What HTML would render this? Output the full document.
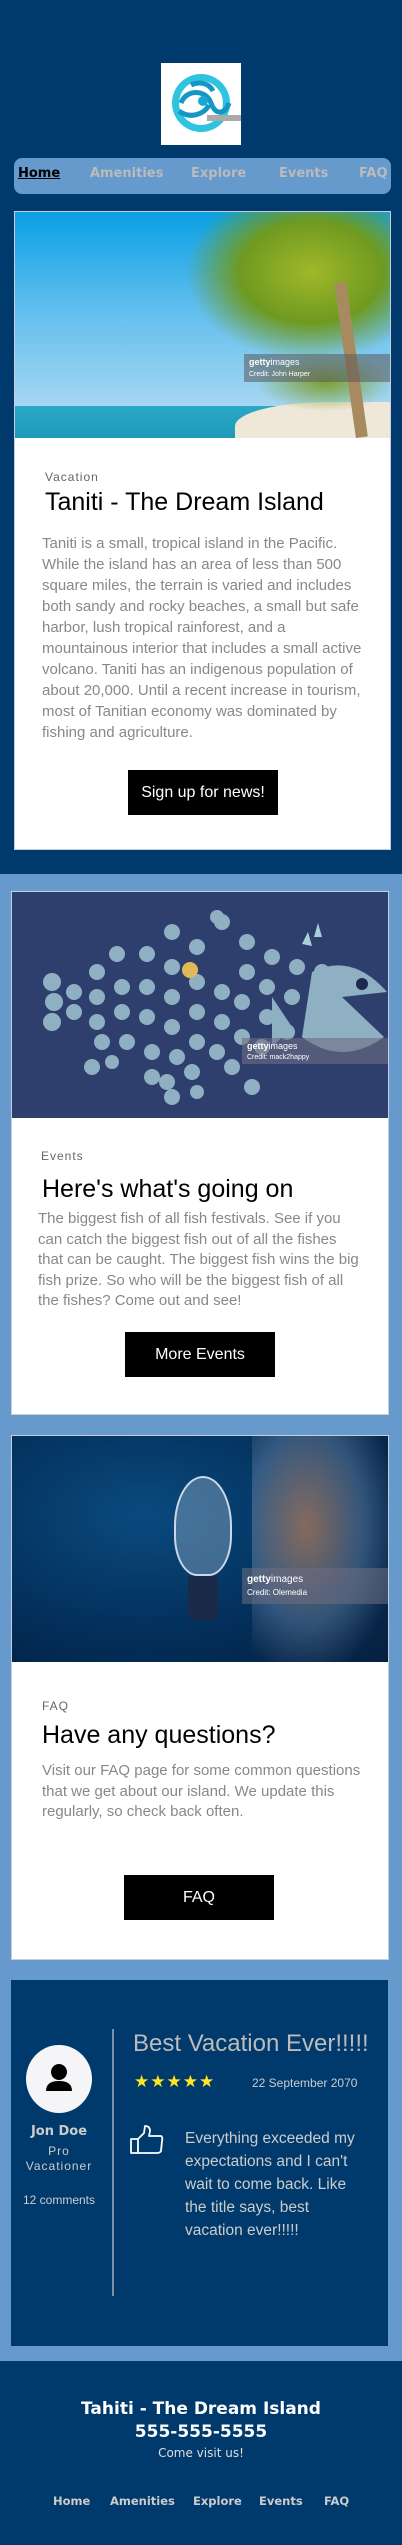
<!DOCTYPE html>
<html><head><meta charset="utf-8"><style>
*{margin:0;padding:0;box-sizing:border-box}
body{width:402px;height:2545px;position:relative;background:#6699cc;font-family:"Liberation Sans",Arial,sans-serif;overflow:hidden}
.a{position:absolute}
.dark{background:#003a6c}
.card{position:absolute;background:#fff;border:1px solid #ccd}
.lbl{position:absolute;font-size:12px;color:#666;letter-spacing:1px}
.ttl{position:absolute;font-size:25px;color:#000;white-space:nowrap}
.par{position:absolute;font-size:15px;color:#888;line-height:20.5px}
.btn{position:absolute;background:#000;color:#fff;font-size:16px;display:flex;align-items:center;justify-content:center}
.nav{font-family:"DejaVu Sans",sans-serif;font-weight:bold;font-size:13px;color:#bbb;position:absolute}
.fnav{font-family:"DejaVu Sans",sans-serif;font-weight:bold;font-size:11.5px;color:#ccc;position:absolute}
</style></head><body>
<div class="a dark" style="left:0;top:0;width:402px;height:874px"></div>
<div class="a" style="left:161px;top:63px;width:80px;height:82px;background:#fff">
<svg width="80" height="82" viewBox="0 0 80 82"><circle cx="40" cy="40" r="29" fill="#2ec4e0"/><circle cx="40" cy="40" r="22" fill="#fff"/><path d="M20 40c5-14 25-14 30 0s15 10 18 0M18 48c10 8 25 4 30-6M30 22c8-4 18-2 22 6" stroke="#1597c6" stroke-width="5" fill="none"/><circle cx="42" cy="38" r="5" fill="#1aa8d4"/><rect x="46" y="52" width="34" height="6" fill="#aaa"/></svg></div>
<div class="a" style="left:14px;top:158px;width:377px;height:36px;background:#6699cc;border-radius:8px"></div>
<div class="nav" style="left:18px;top:166px;color:#000;text-decoration:underline">Home</div>
<div class="nav" style="left:90px;top:166px">Amenities</div>
<div class="nav" style="left:191px;top:166px">Explore</div>
<div class="nav" style="left:279px;top:166px">Events</div>
<div class="nav" style="left:359px;top:166px">FAQ</div>

<div class="card" style="left:14px;top:211px;width:377px;height:639px">
<div class="a" style="left:0;top:0;width:375px;height:226px;background:linear-gradient(180deg,#0aa0e4 0%,#5bbcee 40%,#a9d8f2 88%);overflow:hidden">
<div class="a" style="left:0;top:194px;width:375px;height:32px;background:linear-gradient(180deg,#2aa8c8,#1f9ab8)"></div>
<div class="a" style="left:220px;top:190px;width:160px;height:40px;background:#efe8d8;border-radius:60% 0 0 0"></div>
<div class="a" style="left:170px;top:0;width:210px;height:150px;background:radial-gradient(ellipse at 60% 40%,#a0b82a 0%,#6f9a20 40%,rgba(80,120,30,0) 70%)"></div>
<div class="a" style="left:240px;top:140px;width:140px;height:60px;background:radial-gradient(ellipse,#7fa030 0%,rgba(100,140,40,0) 70%)"></div>
<div class="a" style="left:330px;top:70px;width:12px;height:156px;background:#a88a60;transform:rotate(-8deg)"></div>
<div class="a" style="left:229px;top:142px;width:146px;height:28px;background:rgba(90,90,90,.55);color:#fff;font-size:9px;line-height:11px;padding:3px 5px"><b>getty</b>images<br><span style="font-size:7px">Credit: John Harper</span></div>
</div>
<div class="lbl" style="left:30px;top:258px">Vacation</div>
<div class="ttl" style="left:30px;top:276px">Taniti - The Dream Island</div>
<div class="par" style="left:27px;top:321px;width:322px;line-height:21px">Taniti is a small, tropical island in the Pacific. While the island has an area of less than 500 square miles, the terrain is varied and includes both sandy and rocky beaches, a small but safe harbor, lush tropical rainforest, and a mountainous interior that includes a small active volcano. Taniti has an indigenous population of about 20,000. Until a recent increase in tourism, most of Tanitian economy was dominated by fishing and agriculture.</div>
<div class="btn" style="left:113px;top:558px;width:150px;height:45px">Sign up for news!</div>
</div>

<div class="card" style="left:11px;top:891px;width:378px;height:524px">
<div class="a" style="left:0;top:0;width:376px;height:226px;background:#2e3f6e;overflow:hidden">
<svg width="376" height="226" class="a" style="left:0;top:0">
<g fill="#8fb0c2">
<circle cx="40" cy="90" r="9"/><circle cx="42" cy="110" r="9"/><circle cx="40" cy="130" r="9"/><circle cx="62" cy="100" r="8"/><circle cx="62" cy="120" r="8"/>
<circle cx="85" cy="80" r="8"/><circle cx="85" cy="105" r="8"/><circle cx="85" cy="130" r="8"/><circle cx="90" cy="150" r="8"/><circle cx="80" cy="175" r="8"/>
<circle cx="105" cy="62" r="8"/><circle cx="110" cy="95" r="8"/><circle cx="110" cy="120" r="8"/><circle cx="115" cy="150" r="8"/><circle cx="100" cy="170" r="7"/>
<circle cx="135" cy="62" r="8"/><circle cx="135" cy="95" r="8"/><circle cx="135" cy="125" r="8"/><circle cx="140" cy="160" r="8"/><circle cx="140" cy="185" r="8"/>
<circle cx="160" cy="40" r="8"/><circle cx="160" cy="75" r="8"/><circle cx="160" cy="105" r="8"/><circle cx="160" cy="135" r="8"/><circle cx="165" cy="165" r="8"/>
<circle cx="185" cy="55" r="8"/><circle cx="185" cy="90" r="8"/><circle cx="185" cy="120" r="8"/><circle cx="185" cy="150" r="8"/><circle cx="180" cy="180" r="8"/>
<circle cx="210" cy="30" r="8"/><circle cx="210" cy="100" r="8"/><circle cx="210" cy="130" r="8"/><circle cx="205" cy="160" r="8"/><circle cx="155" cy="190" r="8"/>
<circle cx="235" cy="50" r="8"/><circle cx="235" cy="80" r="8"/><circle cx="230" cy="110" r="8"/><circle cx="230" cy="145" r="8"/><circle cx="220" cy="175" r="8"/>
<circle cx="260" cy="65" r="8"/><circle cx="255" cy="95" r="8"/><circle cx="255" cy="125" r="8"/><circle cx="250" cy="155" r="8"/><circle cx="240" cy="195" r="8"/>
<circle cx="285" cy="75" r="8"/><circle cx="280" cy="105" r="8"/><circle cx="275" cy="140" r="8"/><circle cx="160" cy="205" r="8"/><circle cx="185" cy="200" r="7"/>
<circle cx="310" cy="80" r="8"/><circle cx="305" cy="120" r="8"/><circle cx="205" cy="25" r="7"/>
<path d="M260 105 L280 135 L260 155 Z"/><path d="M300 80 Q340 60 375 100 L330 105 L372 145 Q330 175 290 145 Z"/>
</g>
<circle cx="178" cy="78" r="8" fill="#e2b95a"/><circle cx="350" cy="92" r="6" fill="#1c2a50"/>
<path d="M290 52 l6 -12 l4 14z M302 45 l4 -14 l4 14z" fill="#a8d0d6"/>
</svg>
<div class="a" style="left:230px;top:146px;width:146px;height:26px;background:rgba(110,110,130,.6);color:#fff;font-size:9px;line-height:10px;padding:3px 5px"><b>getty</b>images<br><span style="font-size:7px">Credit: mack2happy</span></div>
</div>
<div class="lbl" style="left:29px;top:257px">Events</div>
<div class="ttl" style="left:30px;top:283px">Here's what's going on</div>
<div class="par" style="left:26px;top:317px;width:325px">The biggest fish of all fish festivals. See if you can catch the biggest fish out of all the fishes that can be caught. The biggest fish wins the big fish prize. So who will be the biggest fish of all the fishes? Come out and see!</div>
<div class="btn" style="left:113px;top:440px;width:150px;height:45px">More Events</div>
</div>

<div class="card" style="left:11px;top:1435px;width:378px;height:525px">
<div class="a" style="left:0;top:0;width:376px;height:226px;background:radial-gradient(ellipse at 35% 35%,#0a4a7e 0%,#03305c 55%,#021e3e 100%);overflow:hidden">
<div class="a" style="left:162px;top:40px;width:58px;height:100px;border-radius:50% 50% 40% 40%;background:rgba(180,200,220,.35);border:2px solid #c8d8e8"></div>
<div class="a" style="left:176px;top:140px;width:30px;height:44px;background:#1a2a48;border-radius:0 0 6px 6px"></div>
<div class="a" style="left:240px;top:0;width:136px;height:226px;background:radial-gradient(ellipse at 40% 40%,rgba(240,150,90,.55),rgba(140,160,190,.35) 50%,rgba(20,40,70,.2) 80%)"></div>
<div class="a" style="left:230px;top:132px;width:146px;height:36px;background:rgba(110,110,130,.55);color:#fff;font-size:10px;line-height:13px;padding:5px 5px"><b>getty</b>images<br><span style="font-size:8px">Credit: Olemedia</span></div>
</div>
<div class="lbl" style="left:30px;top:263px">FAQ</div>
<div class="ttl" style="left:30px;top:285px">Have any questions?</div>
<div class="par" style="left:30px;top:325px;width:330px">Visit our FAQ page for some common questions that we get about our island. We update this regularly, so check back often.</div>
<div class="btn" style="left:112px;top:439px;width:150px;height:45px">FAQ</div>
</div>

<div class="a dark" style="left:11px;top:1980px;width:377px;height:366px">
<div class="a" style="left:15px;top:65px;width:66px;height:68px;border-radius:50%;background:#f5f5f7">
<svg width="66" height="68" viewBox="0 0 66 68"><circle cx="33" cy="27" r="8" fill="#000"/><path d="M20 46 Q20 36 33 36 Q46 36 46 46 Z" fill="#000"/></svg></div>
<div class="a" style="left:0;top:144px;width:96px;text-align:center;font-family:'DejaVu Sans',sans-serif;font-weight:bold;font-size:13px;color:#ccc">Jon Doe</div>
<div class="a" style="left:0;top:164px;width:96px;text-align:center;font-size:12px;color:#ccc;letter-spacing:1px;line-height:15px">Pro<br>Vacationer</div>
<div class="a" style="left:0;top:213px;width:96px;text-align:center;font-size:12px;color:#ccc">12 comments</div>
<div class="a" style="left:101px;top:49px;width:2px;height:267px;background:#7a8fa8"></div>
<div class="a" style="left:122px;top:50px;font-size:24px;color:#bbb;white-space:nowrap">Best Vacation Ever!!!!!</div>
<div class="a" style="left:123px;top:92px;font-size:17px;color:#ffe620;letter-spacing:1px">★★★★★</div>
<div class="a" style="left:241px;top:96px;font-size:12px;color:#ccc">22 September 2070</div>
<svg class="a" style="left:119px;top:145px" width="34" height="30" viewBox="0 0 34 30"><path d="M1 14h7v14H1z M8 14 L14 8 L15 1 Q20 1 20 6 L19 11 H31 Q33 12 32 16 L31 26 Q30 28 27 28 H8" fill="none" stroke="#fff" stroke-width="1.8" stroke-linejoin="round"/></svg>
<div class="a" style="left:174px;top:147px;width:182px;font-size:15.5px;color:#ccc;line-height:23px">Everything exceeded my expectations and I can't wait to come back. Like the title says, best vacation ever!!!!!</div>
</div>

<div class="a dark" style="left:0;top:2361px;width:402px;height:184px">
<div class="a" style="left:0;top:37px;width:402px;text-align:center;font-family:'DejaVu Sans',sans-serif;font-weight:bold;font-size:17px;color:#fff;line-height:23px">Tahiti - The Dream Island<br>555-555-5555</div>
<div class="a" style="left:0;top:85px;width:402px;text-align:center;font-family:'DejaVu Sans',sans-serif;font-size:12px;color:#ddd">Come visit us!</div>
<div class="fnav" style="left:53px;top:133px">Home</div>
<div class="fnav" style="left:110px;top:133px">Amenities</div>
<div class="fnav" style="left:193px;top:133px">Explore</div>
<div class="fnav" style="left:259px;top:133px">Events</div>
<div class="fnav" style="left:324px;top:133px">FAQ</div>
</div>
</body></html>
